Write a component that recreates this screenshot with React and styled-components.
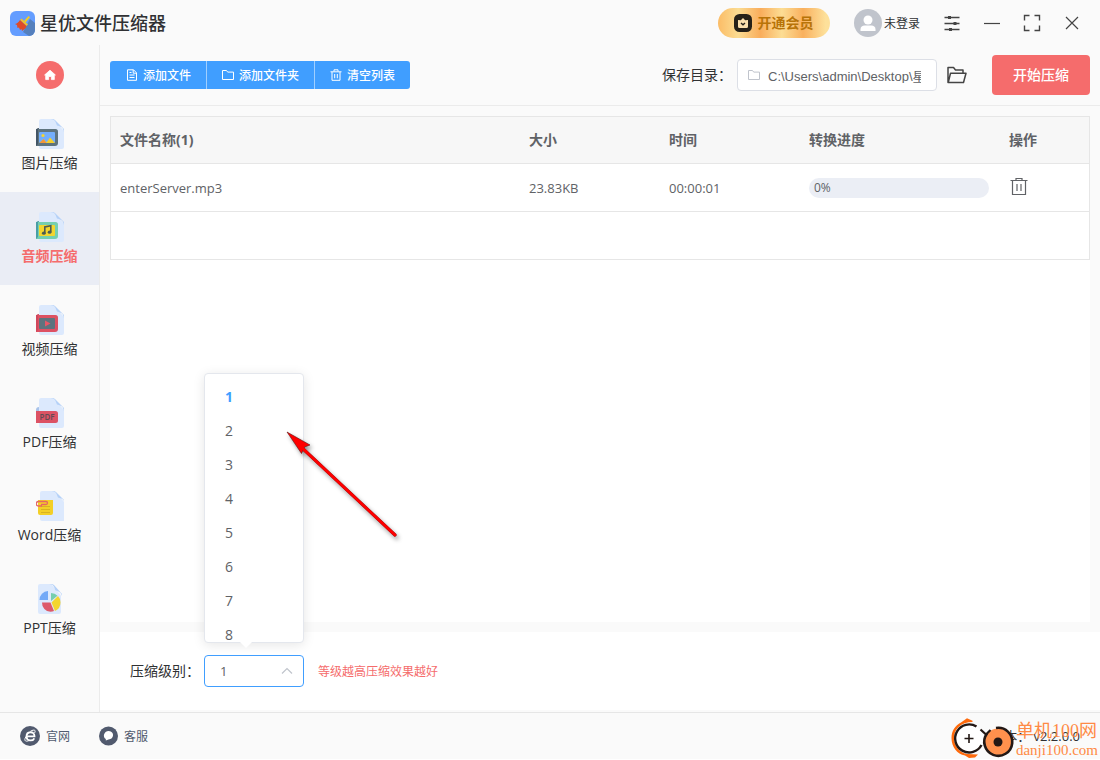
import React, { useState } from 'react';
import styled, { createGlobalStyle, css } from 'styled-components';

const GlobalStyle = createGlobalStyle`
    * {
        box-sizing: border-box;
    }
    body {
        margin: 0;
        background: #fff;
        color: #303133;
        font-family: 'Open Sans', 'Noto Sans CJK SC', sans-serif;
        font-size: 14px;
    }
    button, select, input {
        font-family: inherit;
    }
    button {
        padding: 0;
        border: 0;
        background: none;
        cursor: pointer;
    }
    svg {
        display: block;
        flex: none;
    }
`;

const Window = styled.div`
    display: flex;
    flex-direction: column;
    min-height: calc(100vh - 1px);
    background: #fafafa;
    position: relative;
`;

const Header = styled.header`
    display: flex;
    align-items: center;
    height: 45px;
    padding: 1px 18px 0 10px;
`;

const Brand = styled.h1`
    display: flex;
    align-items: center;
    gap: 5px;
    margin: 0 auto 0 0;
    font-size: 18px;
    line-height: 24px;
    font-weight: 500;
`;

const VipButton = styled.button`
    display: flex;
    align-items: center;
    justify-content: center;
    gap: 5px;
    width: 112px;
    height: 30px;
    margin-right: 24px;
    border-radius: 15px;
    background: linear-gradient(90deg, #fbbc66, #fbdc92 18%, #f9ad5c 38%, #fcdd94 57%, #f9b05e 76%, #fde09a 96%);
    color: #b87308;
    font-size: 14px;
    line-height: 20px;
    font-weight: 700;
`;

const UserButton = styled.button`
    display: flex;
    align-items: center;
    gap: 2px;
    margin-right: 22px;
    color: #303133;
    font-size: 12px;
`;

const WindowTools = styled.div`
    display: flex;
    gap: 20px;
`;

const ToolButton = styled.button`
    display: flex;
    align-items: center;
    justify-content: center;
    width: 20px;
    height: 20px;
    color: #444;
`;

const Body = styled.div`
    display: flex;
    flex: 1;
`;

const Sidebar = styled.nav`
    width: 100px;
    border-right: 1px solid #ebebeb;
`;

const HomeButton = styled.button`
    display: flex;
    align-items: center;
    justify-content: center;
    width: 28px;
    height: 28px;
    margin: 16px auto 10px;
    border-radius: 50%;
    background: #f56c6c;
`;

const NavItem = styled.button`
    display: flex;
    flex-direction: column;
    align-items: center;
    gap: 4px;
    width: 100%;
    height: 93px;
    padding-top: 20px;
    color: #303133;
    font-size: 14px;
    line-height: 20px;
    ${props => props.$active && css`
        background: #eaedf5;
        color: #f56c6c;
        font-weight: 700;
    `}
`;

const Main = styled.main`
    display: flex;
    flex: 1;
    flex-direction: column;
    min-width: 0;
`;

const Toolbar = styled.div`
    display: flex;
    align-items: center;
    height: 61px;
    padding: 0 10px;
    border-bottom: 1px solid #ebebeb;
`;

const ButtonGroup = styled.div`
    display: flex;
    margin-right: auto;
    border-radius: 3px;
    overflow: hidden;
`;

const ActionButton = styled.button`
    display: flex;
    align-items: center;
    gap: 5px;
    height: 28px;
    padding: 0 15px 0 16px;
    background: #409eff;
    color: #fff;
    font-size: 12px;
    font-weight: 500;
    & + & {
        padding: 0 15px;
        border-left: 1px solid #a0cfff;
    }
`;

const PathLabel = styled.label`
    margin-right: 5px;
    line-height: 20px;
`;

const PathBox = styled.div`
    display: flex;
    align-items: center;
    gap: 8px;
    width: 200px;
    height: 32px;
    padding: 0 15px 0 10px;
    border: 1px solid #dcdfe6;
    border-radius: 4px;
    background: #fff;
    color: #c0c4cc;
`;

const PathInput = styled.input`
    flex: 1;
    min-width: 0;
    padding: 0;
    border: 0;
    outline: 0;
    background: none;
    color: #606266;
    font-family: 'Liberation Sans', 'Noto Sans CJK SC', sans-serif;
    font-size: 13px;
`;

const OpenButton = styled.button`
    margin: 0 25px 0 10px;
    color: #444;
`;

const StartButton = styled.button`
    height: 40px;
    padding: 0 21px;
    border-radius: 4px;
    background: #f56c6c;
    color: #fff;
    font-size: 14px;
    line-height: 20px;
    font-weight: 500;
`;

const TablePanel = styled.section`
    flex: 1;
    margin: 10px;
    background: #fff;
`;

const FileTable = styled.table`
    width: 100%;
    table-layout: fixed;
    border: 1px solid #e6e6e6;
    border-bottom: 0;
    border-spacing: 0;
    color: #606266;
    th, td {
        height: 48px;
        padding: 0 10px;
        border-bottom: 1px solid #e6e6e6;
        font-size: 13px;
        text-align: left;
    }
    th {
        height: 47px;
        background: #f7f7f7;
        color: #606266;
        font-size: 14px;
        line-height: 20px;
        font-weight: 700;
    }
    th:first-child, td:first-child {
        padding-left: 9px;
    }
`;

const Col = styled.col`
    width: ${props => props.$width}px;
`;

const Progress = styled.div`
    height: 20px;
    padding: 0 5px;
    border-radius: 10px;
    background: #ebeef5;
    font-size: 12px;
    line-height: 20px;
`;

const DeleteButton = styled.button`
    display: block;
    margin: 0 0 4px 1px;
    color: #606266;
`;

const Settings = styled.section`
    display: flex;
    align-items: center;
    height: 78px;
    margin-bottom: 2px;
    padding-left: 30px;
    background: #fff;
`;

const LevelLabel = styled.label`
    margin-right: 4px;
    line-height: 20px;
`;

const LevelBox = styled.div`
    position: relative;
    width: 100px;
    color: #c0c4cc;
    > svg {
        position: absolute;
        top: 10px;
        right: 11px;
        pointer-events: none;
    }
`;

const LevelSelect = styled.select`
    display: block;
    width: 100%;
    height: 32px;
    padding: 0 30px 0 15px;
    border: 1px solid #409eff;
    border-radius: 4px;
    outline: 0;
    appearance: none;
    background: #fff;
    color: #606266;
    font-size: 13px;
`;

const Popup = styled.div`
    position: absolute;
    bottom: calc(100% + 12px);
    left: 0;
    width: 100%;
    border: 1px solid #e4e7ed;
    border-radius: 4px;
    background: #fff;
    box-shadow: 0 2px 12px rgba(0, 0, 0, 0.1);
    &::after {
        content: '';
        position: absolute;
        top: 100%;
        left: 35px;
        border: 6px solid transparent;
        border-top-color: #fff;
        border-bottom: 0;
    }
`;

const OptionList = styled.ul`
    height: 268px;
    margin: 0;
    padding: 6px 0;
    overflow: hidden;
    list-style: none;
`;

const Option = styled.li`
    height: 34px;
    padding: 0 20px;
    color: #606266;
    line-height: 34px;
    cursor: pointer;
    ${props => props.$selected && css`
        color: #409eff;
        font-weight: 700;
    `}
`;

const Pointer = styled.div`
    position: absolute;
    top: 50px;
    left: 75px;
    pointer-events: none;
`;

const Hint = styled.span`
    margin-left: 14px;
    color: #f56c6c;
    font-size: 12px;
`;

const Footer = styled.footer`
    display: flex;
    align-items: center;
    gap: 29px;
    height: 47px;
    padding: 0 20px;
    border-top: 1px solid #e6e6e6;
`;

const FooterLink = styled.a`
    display: flex;
    align-items: center;
    gap: 6px;
    color: #515a6e;
    font-size: 12px;
    text-decoration: none;
`;

const Version = styled.span`
    margin-left: auto;
    font-size: 13px;
    line-height: 20px;
`;

const Watermark = styled.div`
    display: flex;
    align-items: center;
    position: absolute;
    right: 2px;
    bottom: 0;
    color: #ff8a45;
    pointer-events: none;
`;

const WatermarkText = styled.div`
    padding-top: 4px;
    font-family: 'Liberation Serif', 'Noto Sans CJK SC', serif;
    font-size: 15px;
    line-height: 18px;
    strong {
        display: block;
        font-size: 18px;
        line-height: 20px;
        font-weight: 400;
    }
`;

const Logo = () => (
    <svg width="25" height="25" viewBox="0 0 25 25">
        <rect width="25" height="25" rx="6" fill="#649dff" />
        <path d="M20 8 25 12v7a6 6 0 0 1-6 6l-6-4z" fill="#5580bd" />
        <path d="m14 10 4.500-5 1.500 1.300-4.500 5.200z" fill="#f4cb22" />
        <path d="m11.500 7.500 6.500 6-1.500 1.500-6.500-6z" fill="#efc22b" />
        <path d="m10 9 6.500 6c-.5 2-2 3.500-4.500 5l-.5-2-1.500 1-1-2.500-1.500.5-.5-3-2-1c2.500-.5 3.500-2 5-4z" fill="#df4b26" />
    </svg>
);

const VipIcon = () => (
    <svg width="18" height="18" viewBox="0 0 18 18">
        <rect width="18" height="18" rx="5.500" fill="#262118" />
        <path d="M4 6 6.800 6.300 9 4l2.200 2.300L14 6v6.500a1.500 1.500 0 0 1-1.500 1.500h-7A1.500 1.500 0 0 1 4 12.500z" fill="#fbe0ac" />
        <path d="m7 9 2 1.800L11 9" fill="none" stroke="#262118" strokeWidth="1.400" />
    </svg>
);

const AvatarIcon = () => (
    <svg width="28" height="28" viewBox="0 0 28 28">
        <circle cx="14" cy="14" r="14" fill="#c0c4cc" />
        <circle cx="14" cy="11" r="4.500" fill="#fff" />
        <path d="M6.500 22v-1.500c0-3 2-4 4-4h7c2 0 4 1 4 4V22z" fill="#fff" />
    </svg>
);

const HomeIcon = () => (
    <svg width="14" height="14" viewBox="0 0 14 14">
        <path d="M7 2.200 1.600 7h1.100v4.600h2.900V8.500h2.800v3.100h2.900V7h1.100z" fill="#fff" stroke="#fff" strokeWidth=".8" strokeLinejoin="round" />
    </svg>
);

// outlined icons share the stroke of the text around them
const Line = ({ size = 12, box = size, width = 1, children }) => (
    <svg width={size} height={size} viewBox={`0 0 ${box} ${box}`} fill="none" stroke="currentColor" strokeWidth={width}>
        {children}
    </svg>
);

const SlidersIcon = () => (
    <Line size={18} width={1.3}>
        <path d="M1.500 3.500h15M1.500 9.500h15M1.500 15.500h15" />
        <path d="M6.500 2v3M12 8v3M7.500 14v3" strokeWidth="3" />
    </Line>
);

const MinusIcon = () => (
    <Line size={18}><path d="M1 9.500h16" strokeWidth="1.200" /></Line>
);

const FullIcon = () => (
    <Line size={18} width={1.4}>
        <path d="M1.500 6.500v-5h5M11.500 1.500h5v5M16.500 11.500v5h-5M6.500 16.500h-5v-5" />
    </Line>
);

const CloseIcon = () => (
    <Line size={14} width={1.2}><path d="m1 1 12 12M13 1 1 13" /></Line>
);

const DocIcon = () => (
    <Line><path d="M1.500.8h6l3 3v7.500h-9zM7.200.8v3.400h3.300M3.500 3.500h2M3.500 6h5M3.500 8.500h5" /></Line>
);

const FolderIcon = () => (
    <Line><path d="M.5 1.500h4l1.200 1.600h5.800v7.400H.5z" /></Line>
);

const BinIcon = () => (
    <Line><path d="M.5 2.800h11M4 2.500V.8h4v1.700M2 3v8.300h8V3M4.700 5v4.300M7.300 5v4.300" /></Line>
);

const TrashIcon = () => (
    <Line size={18} width={1.2}>
        <path d="M.5 3.500h17M6 3.500v-2h6v2M2.500 3.500v14h13v-14M7 7v7M11 7v7" />
    </Line>
);

const OpenFolderIcon = () => (
    <Line size={20} width={1.5}>
        <path d="M1 17.500V2.500h5.500l2 2.500H16v3M1.300 17.300 3.500 8.200h15.500l-2.500 9.300H1z" strokeLinejoin="round" />
    </Line>
);

const ChevronIcon = () => (
    <Line><path d="m1 8.500 5-5 5 5" strokeWidth="1.200" /></Line>
);

const PageShape = () => (
    <g>
        <path d="M5 0h12.500L28 12v16a2 2 0 0 1-2 2H5a2 2 0 0 1-2-2V2a2 2 0 0 1 2-2z" fill="#dce9fd" />
        <path d="M14.500 0c5 .5 5 3 6.500 6.500C23.500 7.500 27 7 28 13v-3L19 1q-1-1-3-1z" fill="#b5d1f8" />
    </g>
);

const FrameShape = ({ edge, fill, inner }) => (
    <g>
        <path d="M0 12q0-3 3-3v16l-3 2z" fill={edge} />
        <path d="M0 10h19.500a2.500 2.500 0 0 1 2.500 2.500v11.500a3 3 0 0 1-3 3H0z" fill={fill} />
        <path d="M0 10h2v15l-2 2z" fill={edge} />
        <rect x="3" y="13" width="16" height="11" rx="1" fill={inner} />
    </g>
);

const ModuleSvg = ({ children }) => (
    <svg width="28" height="30" viewBox="0 0 28 30">{children}</svg>
);

const ImageModule = () => (
    <ModuleSvg>
        <PageShape />
        <FrameShape edge="#435565" fill="#5e747f" inner="#73aefc" />
        <circle cx="7" cy="16.500" r="1.600" fill="#f5d52f" />
        <path d="m3.500 24 4-4 3 3.500 3.500-5 5 5.500z" fill="#f5cf2e" />
        <path d="m3.500 24 4-4 3 4z" fill="#f2953c" />
    </ModuleSvg>
);

const AudioModule = () => (
    <ModuleSvg>
        <PageShape />
        <FrameShape edge="#4a9ea4" fill="#75cfaf" inner="#f3d52e" />
        <path d="M8.800 21v-6l6-1.300v6.200" fill="none" stroke="#4d5c52" strokeWidth="1.600" />
        <ellipse cx="7.800" cy="21.200" rx="1.900" ry="1.600" fill="#4d5c52" />
        <ellipse cx="13.600" cy="20.200" rx="1.900" ry="1.600" fill="#4d5c52" />
    </ModuleSvg>
);

const VideoModule = () => (
    <ModuleSvg>
        <PageShape />
        <FrameShape edge="#d0475b" fill="#dd5163" inner="#5d737e" />
        <path d="m9 15.500 5.500 3-5.500 3z" fill="#e55767" />
    </ModuleSvg>
);

const PdfModule = () => (
    <ModuleSvg>
        <PageShape />
        <path d="M0 12q0-3 3-3v4H0z" fill="#a9c3ea" />
        <path d="M0 13h19.500a2.500 2.500 0 0 1 2.500 2.500v7a2.500 2.500 0 0 1-2.500 2.500H0z" fill="#dc5264" />
        <text x="11" y="22" textAnchor="middle" fontSize="8" fontWeight="600" fill="#5f4a55" fontFamily="Open Sans, sans-serif">PDF</text>
    </ModuleSvg>
);

const WordModule = () => (
    <ModuleSvg>
        <g transform="translate(1 0)">
            <PageShape />
        </g>
        <path d="M2 9h15v13a2 2 0 0 1-2 2H4a2 2 0 0 1-2-2z" fill="#f3cf27" />
        <path d="M5 15.500h9M5 18.500h9M5 21.500h9" stroke="#d8b222" />
        <path d="M6 15H2.500a2 2 0 0 1 0-4.500h7.500a1.500 1.500 0 0 1 0 3H5" fill="none" stroke="#e56565" strokeWidth="1.300" />
    </ModuleSvg>
);

const PptModule = () => (
    <ModuleSvg>
        <path d="M4 0h11l10 11.500V28a2 2 0 0 1-2 2H4a2 2 0 0 1-2-2V2a2 2 0 0 1 2-2z" fill="#dce9fd" />
        <path d="M13 0c5 .5 5 3 6.500 6.500C22 7.500 25 7.500 26 12V10l-8-9q-1-1-3-1z" fill="#b5d1f8" />
        <path d="M12 7v9H3.500a9 9 0 0 1 8.500-9z" fill="#72a9f7" />
        <path d="M15 17V9q4 0 6.500 2.700z" fill="#75ceaf" />
        <path d="M15.500 18.500 22 12q2.500 2.500 2.500 6.500 0 6-5.500 8.500z" fill="#f3d52e" />
        <path d="M14.500 18.500 18 27q-1.500.8-3.500.8A9 9 0 0 1 6 18.500z" fill="#dd596a" />
    </ModuleSvg>
);

const SiteIcon = () => (
    <svg width="20" height="20" viewBox="0 0 20 20">
        <circle cx="10" cy="10" r="10" fill="#515a6e" />
        <path d="M6.500 10.300h8c0-5.600-8-5.300-8 .2 0 4.800 6.300 5 7.800 1.800" fill="none" stroke="#fff" strokeWidth="1.800" />
        <path d="M14.500 7c2-3.500-1-3.500-4-1.800M6 10.500c-3 5 .5 5.500 3.500 3.800" fill="none" stroke="#fff" strokeWidth="1" />
    </svg>
);

const ServiceIcon = () => (
    <svg width="19" height="20" viewBox="0 0 19 20">
        <circle cx="9.500" cy="10" r="9.500" fill="#515a6e" />
        <path d="M9.800 5c6 .3 5.500 8.300-.3 8.500L6.800 14.500V13C3.500 11.500 4.500 5 9.800 5z" fill="#fff" />
    </svg>
);

const WatermarkLogo = () => (
    <svg width="66" height="42" viewBox="0 0 66 42" fill="none">
        <path d="M11 5.500 17 1.200l5.500 2.500v1.300C11 5 4 12 4 21c0 8 5.500 14.500 13 16l11 .5-3 3-6 .5-4-2.500C7 37 1.500 30 1.500 21 1.500 14 5 8.500 11 5.500z" fill="#ff6a0c" />
        <circle cx="19" cy="21.500" r="14" fill="#fff" />
        <path d="M26.500 9.500A14 14 0 1 0 31.500 28" stroke="#231815" strokeWidth="2.400" />
        <path d="M19 17v9M14.500 21.500h9" stroke="#231815" strokeWidth="1.600" />
        <circle cx="48" cy="25" r="13.500" fill="#ff914d" />
        <path d="m30.500 12.500 5.500 5 4.500-4.500" stroke="#231815" strokeWidth="2.200" />
        <path d="M37 16.500A14 14 0 1 0 46 11" stroke="#231815" strokeWidth="2.600" />
        <circle cx="48" cy="25" r="4.500" fill="#231815" />
    </svg>
);

const ArrowMark = () => (
    <svg width="128" height="124" viewBox="0 0 128 124" style={{ filter: 'drop-shadow(2px 3px 2px rgba(0,0,0,.4))' }}>
        <path d="m20 22 95 89" stroke="#a00808" strokeWidth="3.200" strokeLinecap="round" />
        <path d="m20 22 95 89" stroke="#f00" strokeWidth="2.500" strokeLinecap="round" />
        <path d="m7 8 23 13-5.500 2-3 6.500z" fill="#f00" stroke="#5a1212" strokeWidth=".6" />
        <path d="m18 20 9 8.400" stroke="#f00" strokeWidth="2.500" />
    </svg>
);

const modules = [
    { name: '图片压缩', Icon: ImageModule },
    { name: '音频压缩', Icon: AudioModule },
    { name: '视频压缩', Icon: VideoModule },
    { name: 'PDF压缩', Icon: PdfModule },
    { name: 'Word压缩', Icon: WordModule },
    { name: 'PPT压缩', Icon: PptModule },
];

const levels = ['1', '2', '3', '4', '5', '6', '7', '8'];

function TitleBar() {
    return (
        <Header>
            <Brand><Logo />星优文件压缩器</Brand>
            <VipButton><VipIcon />开通会员</VipButton>
            <UserButton><AvatarIcon />未登录</UserButton>
            <WindowTools>
                <ToolButton aria-label="设置"><SlidersIcon /></ToolButton>
                <ToolButton aria-label="最小化"><MinusIcon /></ToolButton>
                <ToolButton aria-label="最大化"><FullIcon /></ToolButton>
                <ToolButton aria-label="关闭"><CloseIcon /></ToolButton>
            </WindowTools>
        </Header>
    );
}

function LevelPicker() {
    const [level, setLevel] = useState('1');

    return (
        <Settings>
            <LevelLabel htmlFor="level">压缩级别：</LevelLabel>
            <LevelBox>
                <LevelSelect id="level" value={level} onChange={e => setLevel(e.target.value)}>
                    {levels.map(n => <option key={n}>{n}</option>)}
                </LevelSelect>
                <ChevronIcon />
                <Popup>
                    <OptionList role="listbox" aria-label="压缩级别">
                        {levels.map(n => (
                            <Option key={n} role="option" aria-selected={n === level} $selected={n === level} onClick={() => setLevel(n)}>
                                {n}
                            </Option>
                        ))}
                    </OptionList>
                    <Pointer><ArrowMark /></Pointer>
                </Popup>
            </LevelBox>
            <Hint>等级越高压缩效果越好</Hint>
        </Settings>
    );
}

function App() {
    const [active, setActive] = useState('音频压缩');
    const [path, setPath] = useState('C:\\Users\\admin\\Desktop\\星优文件压缩器');

    return (
        <Window>
            <GlobalStyle />
            <TitleBar />
            <Body>
                <Sidebar>
                    <HomeButton aria-label="首页"><HomeIcon /></HomeButton>
                    {modules.map(({ name, Icon }) => (
                        <NavItem key={name} $active={name === active} onClick={() => setActive(name)}>
                            <Icon />
                            {name}
                        </NavItem>
                    ))}
                </Sidebar>
                <Main>
                    <Toolbar>
                        <ButtonGroup>
                            <ActionButton><DocIcon />添加文件</ActionButton>
                            <ActionButton><FolderIcon />添加文件夹</ActionButton>
                            <ActionButton><BinIcon />清空列表</ActionButton>
                        </ButtonGroup>
                        <PathLabel htmlFor="path">保存目录：</PathLabel>
                        <PathBox>
                            <FolderIcon />
                            <PathInput id="path" value={path} onChange={e => setPath(e.target.value)} />
                        </PathBox>
                        <OpenButton aria-label="打开目录"><OpenFolderIcon /></OpenButton>
                        <StartButton>开始压缩</StartButton>
                    </Toolbar>
                    <TablePanel>
                        <FileTable>
                            <colgroup>
                                <col />
                                <Col $width={140} />
                                <Col $width={140} />
                                <Col $width={200} />
                                <Col $width={90} />
                            </colgroup>
                            <thead>
                                <tr>
                                    <th>文件名称(1)</th>
                                    <th>大小</th>
                                    <th>时间</th>
                                    <th>转换进度</th>
                                    <th>操作</th>
                                </tr>
                            </thead>
                            <tbody>
                                <tr>
                                    <td>enterServer.mp3</td>
                                    <td>23.83KB</td>
                                    <td>00:00:01</td>
                                    <td><Progress>0%</Progress></td>
                                    <td><DeleteButton aria-label="删除"><TrashIcon /></DeleteButton></td>
                                </tr>
                                <tr>
                                    <td colSpan={5} />
                                </tr>
                            </tbody>
                        </FileTable>
                    </TablePanel>
                    <LevelPicker />
                </Main>
            </Body>
            <Footer>
                <FooterLink href="#site"><SiteIcon />官网</FooterLink>
                <FooterLink href="#service"><ServiceIcon />客服</FooterLink>
                <Version>版本： v2.2.0.0</Version>
            </Footer>
            <Watermark>
                <WatermarkLogo />
                <WatermarkText><strong>单机100网</strong>danji100.com</WatermarkText>
            </Watermark>
        </Window>
    );
}

export default App;
